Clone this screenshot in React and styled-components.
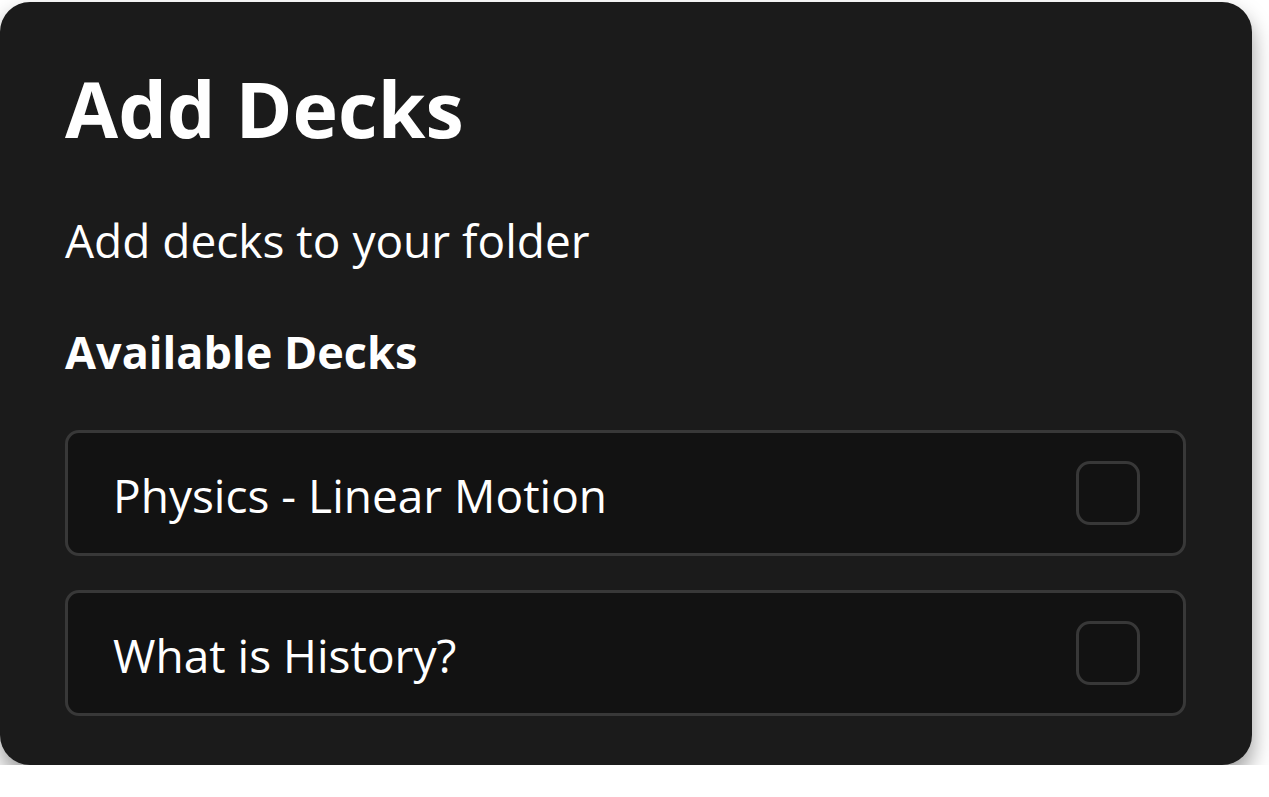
import styled, { createGlobalStyle } from "styled-components";

const GlobalStyle = createGlobalStyle`
  body {
    margin: 0;
    background: #ffffff;
    font-family: "Open Sans", "Noto Sans", sans-serif;
  }
`;

const Card = styled.div`
  margin-top: 2px;
  width: 1252px;
  box-sizing: border-box;
  padding: 68px 66px 49px 65px;
  background: #1b1b1b;
  border-radius: 30px;
  box-shadow: 0 12px 22px rgba(0, 0, 0, 0.4);
  color: #ffffff;
  display: flex;
  flex-direction: column;
`;

const Title = styled.h1`
  margin: 0;
  font-size: 77px;
  line-height: 1;
  font-weight: 700;
`;

const Subtitle = styled.p`
  margin: 70px 0 0;
  font-size: 46px;
  line-height: 1;
  font-weight: 400;
`;

const SectionTitle = styled.h2`
  margin: 66px 0 0;
  font-size: 45px;
  line-height: 1;
  font-weight: 700;
`;

const DeckList = styled.div`
  margin-top: 56px;
  display: flex;
  flex-direction: column;
  gap: 34px;
`;

const DeckRow = styled.label`
  flex: 0 0 126px;
  height: 126px;
  box-sizing: border-box;
  border: 3px solid #383838;
  border-radius: 14px;
  background: #121212;
  display: flex;
  align-items: center;
  justify-content: space-between;
  padding: 4px 43px 0 45px;
`;

const DeckName = styled.span`
  font-size: 46px;
  line-height: 1;
`;

const Check = styled.span`
  width: 64px;
  height: 64px;
  margin-top: -4px;
  box-sizing: border-box;
  border: 3px solid #383838;
  border-radius: 14px;
`;

const decks = ["Physics - Linear Motion", "What is History?"];

export default function App() {
  return (
    <>
      <GlobalStyle />
      <Card>
        <Title>Add Decks</Title>
        <Subtitle>Add decks to your folder</Subtitle>
        <SectionTitle>Available Decks</SectionTitle>
        <DeckList>
          {decks.map((name) => (
            <DeckRow key={name}>
              <DeckName>{name}</DeckName>
              <Check />
            </DeckRow>
          ))}
        </DeckList>
      </Card>
    </>
  );
}
